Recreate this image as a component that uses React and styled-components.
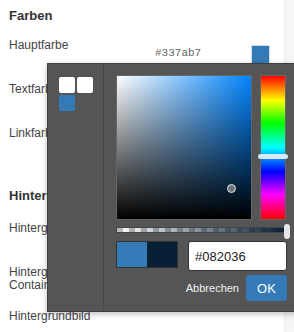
import React from 'react'
import styled, { createGlobalStyle } from 'styled-components'

const GlobalStyle = createGlobalStyle`
  html, body {
    margin: 0;
    padding: 0;
    overflow: hidden;
    background: #fff;
  }
  body {
    font-family: "Liberation Sans", Arial, sans-serif;
    color: #333;
  }
`

const Frame = styled.div`
  display: flex;
  height: 332px;
  position: relative;
  overflow: hidden;
`

const Main = styled.div`
  flex: 1;
  padding: 6px 0 0 9px;
`

const Track = styled.div`
  width: 9px;
  background: #f6f6f6;
  border-left: 1px solid #ececec;
`

const Heading = styled.h3`
  margin: ${p => p.$top || 0}px 0 ${p => p.$gap}px;
  font-size: 13px;
  line-height: 20px;
  font-weight: bold;
  color: #333;
`

const Row = styled.div`
  display: flex;
  align-items: flex-start;
  height: ${p => (p.$last ? 'auto' : '44px')};
`

const Label = styled.div`
  width: 116px;
  margin-right: 30px;
  padding-top: 3px;
  font-size: 12px;
  line-height: 13px;
  color: #444;
`

const Controls = styled.div`
  display: flex;
  align-items: center;
  margin-top: 9px;
`

const HexValue = styled.span`
  width: 96px;
  font-family: "Liberation Mono", "Courier New", monospace;
  font-size: 11px;
  color: #666;
  margin-top: -3px;
`

const ColorChip = styled.div`
  width: 17px;
  height: 17px;
  background: ${p => p.$color};
  border: 1px solid #d6dce2;
`

const Popover = styled.div`
  position: absolute;
  left: 47px;
  top: 63px;
  width: 254px;
  height: 249px;
  box-sizing: border-box;
  display: flex;
  background: #555;
  border: 1px solid #3e3e3e;
  box-shadow: 0 2px 6px rgba(0, 0, 0, 0.25);
`

const SwatchPanel = styled.div`
  width: 56px;
  box-sizing: border-box;
  padding: 13px 0 0 11px;
  border-right: 1px solid #474747;
`

const SwatchGrid = styled.div`
  display: grid;
  grid-template-columns: repeat(2, 16px);
  gap: 2px 2px;
`

const Swatch = styled.div`
  width: 16px;
  height: 16px;
  border-radius: 2px;
  background: ${p => p.$color};
`

const Picker = styled.div`
  display: flex;
  flex-direction: column;
  padding: 11px 0 10px 12px;
`

const TopArea = styled.div`
  display: flex;
  gap: 8px;
`

const SatBox = styled.div`
  position: relative;
  width: 136px;
  height: 145px;
  box-sizing: border-box;
  border: 1px solid #666;
  background:
    linear-gradient(to top, #000, rgba(0, 0, 0, 0)),
    linear-gradient(to right, #fff, #0084ff);
`

const Cursor = styled.div`
  position: absolute;
  left: 110px;
  top: 108px;
  width: 7px;
  height: 7px;
  border-radius: 50%;
  border: 1px solid #e4e4e4;
  background: #6c7580;
`

const HueBar = styled.div`
  position: relative;
  width: 26px;
  height: 145px;
  box-sizing: border-box;
  border: 1px solid #666;
  background: linear-gradient(
    to bottom,
    #f00 0%,
    #ff0 17%,
    #0f0 33%,
    #0ff 50%,
    #00f 67%,
    #f0f 83%,
    #f00 100%
  );
`

const HueHandle = styled.div`
  position: absolute;
  left: -3px;
  right: -3px;
  top: 78px;
  height: 5px;
  border-radius: 3px;
  background: #d8eaf5;
`

const AlphaBar = styled.div`
  position: relative;
  margin-top: 7px;
  width: 170px;
  height: 7px;
  box-sizing: border-box;
  border: 1px solid #444;
  background:
    linear-gradient(to right, rgba(8, 32, 54, 0), #082036),
    repeating-conic-gradient(#fff 0% 25%, #bbb 0% 50%) 0 0 / 12px 12px;
`

const AlphaHandle = styled.div`
  position: absolute;
  right: -5px;
  top: -4px;
  width: 6px;
  height: 15px;
  border-radius: 3px;
  background: #e6e6e6;
`

const BottomRow = styled.div`
  display: flex;
  align-items: flex-start;
  gap: 10px;
  margin-top: 8px;
`

const Preview = styled.div`
  display: flex;
  width: 62px;
  height: 27px;
  box-sizing: border-box;
  border: 1px solid #333;
`

const PreviewHalf = styled.div`
  flex: 1;
  background: ${p => p.$color};
`

const HexInput = styled.input`
  width: 99px;
  height: 30px;
  box-sizing: border-box;
  border: 1px solid #333;
  border-radius: 3px;
  padding: 0 6px;
  font-family: "Liberation Sans", Arial, sans-serif;
  font-size: 13px;
  color: #222;
  background: #fff;
  outline: none;
`

const Actions = styled.div`
  display: flex;
  justify-content: flex-end;
  align-items: center;
  gap: 7px;
  margin-top: 4px;
  width: 171px;
`

const CancelButton = styled.button`
  border: none;
  background: none;
  padding: 0;
  font-family: "Liberation Sans", Arial, sans-serif;
  font-size: 11px;
  color: #f2f2f2;
  cursor: pointer;
`

const OkButton = styled.button`
  width: 41px;
  height: 26px;
  border: none;
  border-radius: 3px;
  background: #337ab7;
  color: #fff;
  font-family: "Liberation Sans", Arial, sans-serif;
  font-size: 13px;
  cursor: pointer;
`

const colorRows = [
  { label: 'Hauptfarbe', value: '#337ab7' },
  { label: 'Textfarbe', value: '#333333' },
  { label: 'Linkfarbe', value: '#337ab7' },
]

const bgRows = [
  { label: 'Hintergrundfarbe' },
  { label: 'Hintergrundfarbe Container' },
  { label: 'Hintergrundbild', last: true },
]

function SettingRow({ label, value, last }) {
  return (
    <Row $last={last}>
      <Label>{label}</Label>
      {value && (
        <Controls>
          <HexValue>{value}</HexValue>
          <ColorChip $color={value} />
        </Controls>
      )}
    </Row>
  )
}

export default function App() {
  return (
    <>
      <GlobalStyle />
      <Frame>
        <Main>
          <Heading $gap={10}>Farben</Heading>
          {colorRows.map(r => <SettingRow key={r.label} {...r} />)}
          <Heading $top={18} $gap={13}>Hintergrund</Heading>
          {bgRows.map(r => <SettingRow key={r.label} {...r} />)}
        </Main>
        <Track />

        <Popover>
          <SwatchPanel>
            <SwatchGrid>
              <Swatch $color="#fff" />
              <Swatch $color="#fff" />
              <Swatch $color="#337ab7" />
            </SwatchGrid>
          </SwatchPanel>
          <Picker>
            <TopArea>
              <SatBox>
                <Cursor />
              </SatBox>
              <HueBar>
                <HueHandle />
              </HueBar>
            </TopArea>
            <AlphaBar>
              <AlphaHandle />
            </AlphaBar>
            <BottomRow>
              <Preview>
                <PreviewHalf $color="#337ab7" />
                <PreviewHalf $color="#082036" />
              </Preview>
              <HexInput defaultValue="#082036" />
            </BottomRow>
            <Actions>
              <CancelButton>Abbrechen</CancelButton>
              <OkButton>OK</OkButton>
            </Actions>
          </Picker>
        </Popover>
      </Frame>
    </>
  )
}
